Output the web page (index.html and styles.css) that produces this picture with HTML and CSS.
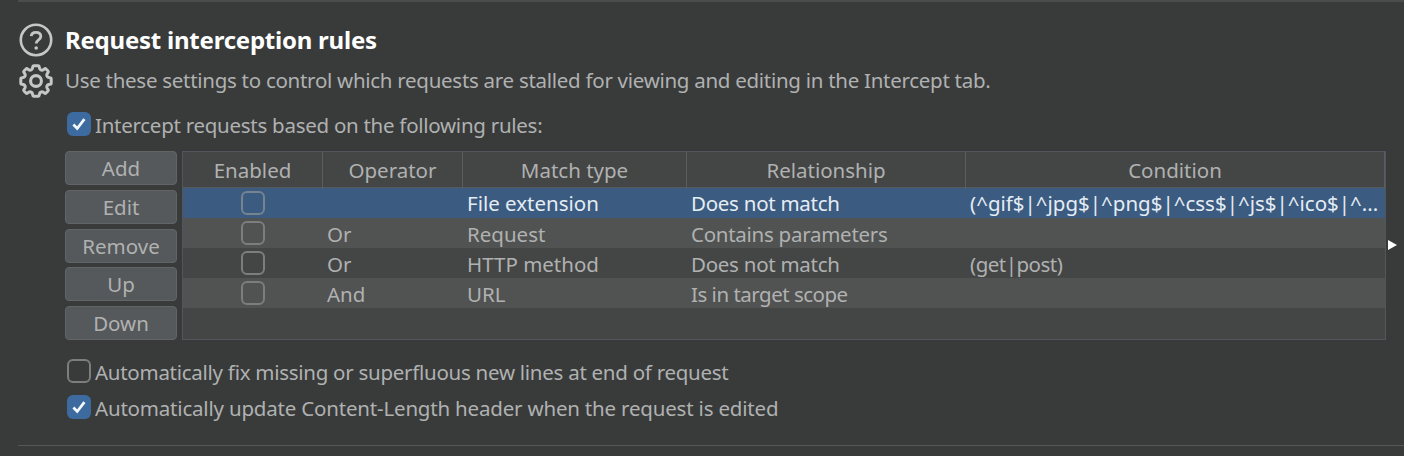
FILE: index.html
```html
<!DOCTYPE html>
<html lang="en">
<head>
<meta charset="utf-8">
<title>Request interception rules</title>
<link rel="stylesheet" href="styles.css">
</head>
<body>
<section class="panel">
  <div class="icons">
    <svg class="icon" viewBox="0 0 34 34" fill="none"><circle cx="17" cy="17" r="15.2" stroke-width="2.6"/><path d="M12.2 13.2C12.4 10.5 14.2 9.3 17 9.3s4.8 1.5 4.8 4.1c0 3.4-4.6 3.4-4.6 7.1" stroke-width="2.8"/><circle class="dot" cx="17.2" cy="25" r="1.8"/></svg>
    <svg class="icon" viewBox="0 0 34 34" fill="none"><path d="M14.6 1.8H19.4Q20.2 1.8 20.3 3Q20.5 6.1 23 6.3Q24.2 6.2 25.4 5Q26.3 4.3 27 5L29 7Q29.7 7.7 29 8.6Q27.8 9.8 27.7 11Q27.9 13.5 31 13.7Q32.2 13.8 32.2 14.6V19.4Q32.2 20.2 31 20.3Q27.9 20.5 27.7 23Q27.8 24.2 29 25.4Q29.7 26.3 29 27L27 29Q26.3 29.7 25.4 29Q24.2 27.8 23 27.7Q20.5 27.9 20.3 31Q20.2 32.2 19.4 32.2H14.6Q13.8 32.2 13.7 31Q13.5 27.9 11 27.7Q9.8 27.8 8.6 29Q7.7 29.7 7 29L5 27Q4.3 26.3 5 25.4Q6.2 24.2 6.3 23Q6.1 20.5 3 20.3Q1.8 20.2 1.8 19.4V14.6Q1.8 13.8 3 13.7Q6.1 13.5 6.3 11Q6.2 9.8 5 8.6Q4.3 7.7 5 7L7 5Q7.7 4.3 8.6 5Q9.8 6.2 11 6.3Q13.5 6.1 13.7 3Q13.8 1.8 14.6 1.8Z" stroke-width="3" stroke-linejoin="round"/><circle cx="17" cy="17" r="5.4" stroke-width="3.1"/></svg>
  </div>
  <div class="content">
    <h1 class="title">Request interception rules</h1>
    <p class="intro">Use these settings to control which requests are stalled for viewing and editing in the Intercept tab.</p>
    <div class="option"><span class="check on"><svg viewBox="0 0 24 24"><path d="M6.4 12.5l3.8 4 7.2-9.4"/></svg></span><span>Intercept requests based on the following rules:</span></div>
    <div class="editor">
      <div class="buttons">
        <div class="button">Add</div><div class="button">Edit</div><div class="button">Remove</div><div class="button">Up</div><div class="button">Down</div>
      </div>
      <div class="table">
        <div class="row head"><span>Enabled</span><span>Operator</span><span>Match type</span><span>Relationship</span><span>Condition</span></div>
        <div class="row selected"><span><i class="check"></i></span><span></span><span>File extension</span><span class="snug">Does not match</span><span>(^gif$|^jpg$|^png$|^css$|^js$|^ico$|^...</span></div>
        <div class="row alt"><span><i class="check"></i></span><span>Or</span><span>Request</span><span class="snug">Contains parameters</span><span></span></div>
        <div class="row"><span><i class="check"></i></span><span>Or</span><span>HTTP method</span><span class="snug">Does not match</span><span class="tight">(get|post)</span></div>
        <div class="row alt"><span><i class="check"></i></span><span>And</span><span>URL</span><span class="tight">Is in target scope</span><span></span></div>
      </div>
      <svg class="arrow" viewBox="0 0 9 10"><path d="M0 0L9 5L0 10Z"/></svg>
    </div>
    <div class="option fix"><span class="check"></span><span>Automatically fix missing or superfluous new lines at end of request</span></div>
    <div class="option update"><span class="check on"><svg viewBox="0 0 24 24"><path d="M6.4 12.5l3.8 4 7.2-9.4"/></svg></span><span>Automatically update Content-Length header when the request is edited</span></div>
  </div>
</section>
</body>
</html>
```
FILE: styles.css
```css
* { box-sizing: border-box; }
body { margin: 0; width: 1404px; height: 456px; overflow: hidden; background: #393b3b; color: #b0b1b1; font: 20.5px/30px "Noto Sans", sans-serif; white-space: nowrap; }
.panel { display: flex; height: 446px; margin-left: 18px; border-top: 2px solid #4b4d4d; border-bottom: 1px solid #555757; }
.icons { display: flex; flex-direction: column; gap: 7px; width: 47px; padding: 21px 0 0 1px; }
.icon { width: 34px; height: 34px; stroke: #c5c6c6; }
.icon .dot { fill: #c5c6c6; stroke: none; }
.content { flex: 1; padding-top: 21px; }
.title { margin: 0; height: 33px; color: #fff; font-size: 24px; line-height: 33px; font-weight: 700; letter-spacing: -.23px; }
.intro { margin: 9px 0 0; height: 30px; letter-spacing: -.28px; }
.option { display: flex; align-items: center; gap: 4px; height: 30px; margin-top: 15px; padding-left: 2px; letter-spacing: -.27px; }
.check { display: block; flex: none; width: 24px; height: 24px; border: 2px solid #7c7e7e; border-radius: 6px; }
.option .check { margin-bottom: 2px; }
.check.on { background: #3d6b9f; border: 0; }
.check svg { display: block; width: 24px; height: 24px; fill: none; stroke: #f4f8fb; stroke-width: 2.7; }
.editor { display: flex; height: 189px; margin-top: 11px; }
.buttons { display: flex; flex-direction: column; justify-content: space-between; width: 112px; margin-right: 5px; }
.button { height: 34px; border: 1px solid #626567; border-radius: 4px; background: #56595b; text-align: center; line-height: 33px; }
.table { width: 1204px; border: 1px solid #51555e; background: #444646; }
.row { display: grid; grid-template-columns: 140px 140px 224px 279px 1fr; height: 30px; }
.row span { padding-left: 4px; line-height: 33px; }
.row:not(.head) span:first-child { display: flex; justify-content: center; padding: 3px 0 0; }
.row .snug { letter-spacing: -.27px; }
.row .tight { letter-spacing: -.5px; }
.head { height: 36px; border-bottom: 1px solid #55585c; }
.head span { padding: 0; border-right: 1px solid #5b5d5e; text-align: center; line-height: 37px; }
.selected { background: #3c5b80; color: #e4edf5; }
.selected span { line-height: 31px; }
.selected .check { border-color: #748491; }
.alt { background: #515352; }
.arrow { width: 9px; height: 10px; margin: 89px 0 0 2px; fill: #fff; }
.fix { margin-top: 17px; }
.update { margin-top: 6px; letter-spacing: -.19px; }
```
